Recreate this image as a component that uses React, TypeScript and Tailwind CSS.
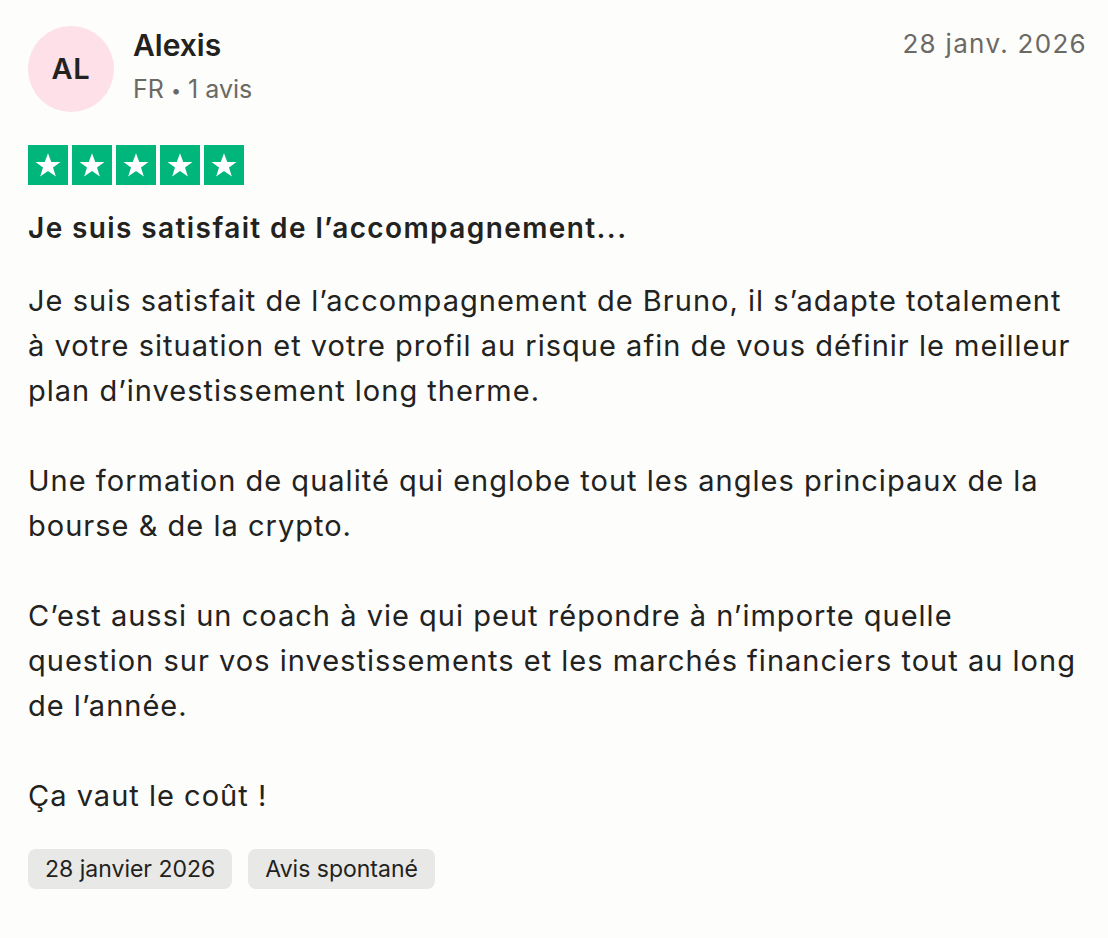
const paragraphs = [
  [
    "Je suis satisfait de l’accompagnement de Bruno, il s’adapte totalement",
    "à votre situation et votre profil au risque afin de vous définir le meilleur",
    "plan d’investissement long therme.",
  ],
  ["Une formation de qualité qui englobe tout les angles principaux de la", "bourse & de la crypto."],
  [
    "C’est aussi un coach à vie qui peut répondre à n’importe quelle",
    "question sur vos investissements et les marchés financiers tout au long",
    "de l’année.",
  ],
  ["Ça vaut le coût !"],
];

function Star() {
  return (
    <div className="w-10 h-10 bg-[#00b67a] flex items-center justify-center">
      <svg viewBox="0 0 24 24" className="w-[30px] h-[30px]" fill="white">
        <path d="M12 2.5l2.6 7.1h7.4l-6 4.4 2.3 7.2L12 16.8l-6.3 4.4L8 14 2 9.6h7.4z" />
      </svg>
    </div>
  );
}

export default function App() {
  return (
    <main
      className="w-[1108px] h-[938px] bg-[#fdfdfc] text-[#222220] px-7 pt-[26px]"
      style={{ fontFamily: "Inter, 'Noto Sans', sans-serif" }}
    >
      <div className="flex items-start justify-between">
        <div className="flex items-center gap-[19px]">
          <div className="w-[86px] h-[86px] rounded-full bg-[#fde0e8] flex items-center justify-center text-[29px] font-semibold tracking-[0.03em]">
            AL
          </div>
          <div className="flex flex-col -mt-[2px]">
            <span className="text-[30px] font-semibold leading-[38px]">Alexis</span>
            <span className="text-[25px] text-[#6b6964] leading-[38px] mt-[6px]">
              FR <span className="text-[18px] align-middle">•</span> 1 avis
            </span>
          </div>
        </div>
        <span className="text-[26px] text-[#6b6964] leading-[36px] tracking-[0.05em] mr-[-7px]">28 janv. 2026</span>
      </div>

      <div className="flex gap-1 mt-[33px]">
        {[1, 2, 3, 4, 5].map((i) => (
          <Star key={i} />
        ))}
      </div>

      <h2 className="text-[28px] font-semibold mt-[23px] leading-[40px] tracking-[0.05em]">
        Je suis satisfait de l’accompagnement...
      </h2>

      <div className="mt-[30px] flex flex-col gap-[45px] text-[29px] leading-[45px] tracking-[0.035em] whitespace-nowrap">
        {paragraphs.map((lines, i) => (
          <p key={i}>
            {lines.map((l, j) => (
              <span key={j} className="block">
                {l}
              </span>
            ))}
          </p>
        ))}
      </div>

      <div className="flex gap-4 mt-[31px]">
        <span className="bg-[#e8e8e6] rounded-lg px-[17px] h-[40px] flex items-center text-[23px]">
          28 janvier 2026
        </span>
        <span className="bg-[#e8e8e6] rounded-lg px-[17px] h-[40px] flex items-center text-[23px]">
          Avis spontané
        </span>
      </div>
    </main>
  );
}
